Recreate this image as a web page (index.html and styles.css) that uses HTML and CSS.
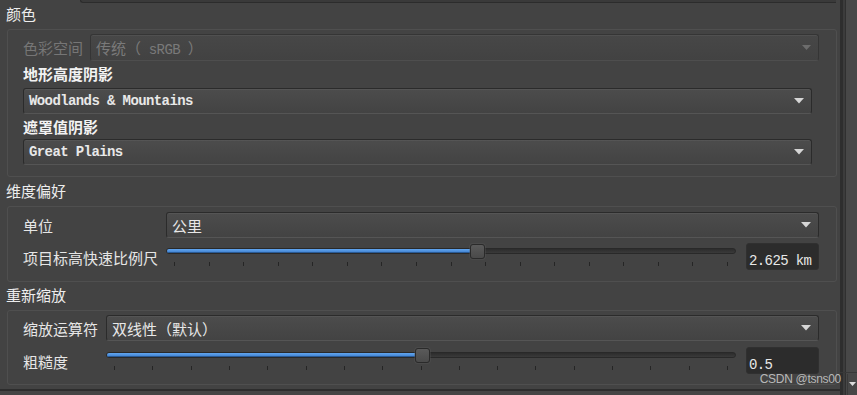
FILE: index.html
```html
<!DOCTYPE html>
<html lang="zh">
<head>
<meta charset="utf-8">
<title>Settings</title>
<link rel="stylesheet" href="styles.css">
</head>
<body>
<div class="window">
  <div class="main">
    <div class="top-strip"></div>

    <div class="section-title t1">颜色</div>
    <div class="group g1">
      <div class="row">
        <span class="label disabled l-space">色彩空间</span>
        <div class="combo combo-disabled">
          <span class="ctext">传统（<span class="mono"> sRGB </span>）</span>
          <svg class="arrow" width="9" height="5" viewBox="0 0 9 5"><polygon points="0,0 9,0 4.5,5"/></svg>
        </div>
      </div>
      <div class="sublabel s1">地形高度阴影</div>
      <div class="combo combo-inset">
        <span class="mono bold">Woodlands &amp; Mountains</span>
        <svg class="arrow" width="10" height="6" viewBox="0 0 10 6"><polygon points="0,0 10,0 5,5.5"/></svg>
      </div>
      <div class="sublabel s2">遮罩值阴影</div>
      <div class="combo combo-inset">
        <span class="mono bold">Great Plains</span>
        <svg class="arrow" width="10" height="6" viewBox="0 0 10 6"><polygon points="0,0 10,0 5,5.5"/></svg>
      </div>
    </div>

    <div class="section-title t2">维度偏好</div>
    <div class="group g2">
      <div class="row">
        <span class="label l-wide">单位</span>
        <div class="combo">
          <span class="ctext">公里</span>
          <svg class="arrow" width="10" height="6" viewBox="0 0 10 6"><polygon points="0,0 10,0 5,5.5"/></svg>
        </div>
      </div>
      <div class="row slider-row sr2">
        <span class="label l-wide">项目标高快速比例尺</span>
        <div class="slider" style="--v:0.548">
          <div class="groove"><div class="fill"></div></div>
          <div class="ticks">
            <i></i><i></i><i></i><i></i><i></i><i></i><i></i><i></i><i></i><i></i><i></i><i></i><i></i><i></i><i></i><i></i><i></i>
          </div>
          <div class="handle"></div>
        </div>
        <div class="value">2.625 km</div>
      </div>
    </div>

    <div class="section-title t3">重新缩放</div>
    <div class="group g3">
      <div class="row">
        <span class="label l-narrow">缩放运算符</span>
        <div class="combo">
          <span class="ctext">双线性（默认）</span>
          <svg class="arrow" width="10" height="6" viewBox="0 0 10 6"><polygon points="0,0 10,0 5,5.5"/></svg>
        </div>
      </div>
      <div class="row slider-row sr3">
        <span class="label l-narrow">粗糙度</span>
        <div class="slider" style="--v:0.502">
          <div class="groove"><div class="fill"></div></div>
          <div class="ticks">
            <i></i><i></i><i></i><i></i><i></i><i></i><i></i><i></i><i></i><i></i><i></i><i></i><i></i><i></i><i></i><i></i><i></i>
          </div>
          <div class="handle"></div>
        </div>
        <div class="value">0.5</div>
      </div>
    </div>

    <div class="footer"></div>
  </div>

  <div class="scrollbar">
    <div class="track"></div>
    <div class="btn-down">
      <svg width="7" height="4" viewBox="0 0 7 4"><polygon points="0,0 7,0 3.5,4"/></svg>
    </div>
  </div>

  <div class="watermark">CSDN @tsns00</div>
</div>
</body>
</html>
```

FILE: styles.css
```css
* { box-sizing: border-box; }

html, body {
  margin: 0;
  padding: 0;
}

body {
  background: #434343;
  font-family: "Noto Sans CJK SC", "Noto Sans", sans-serif;
  font-size: 15px;
  color: #e6e6e6;
}

.window {
  position: relative;
  width: 857px;
  height: 395px;
  display: flex;
  overflow: hidden;
  background: #434343;
}

.main {
  width: 840px;
  display: flex;
  flex-direction: column;
  padding-left: 7px;
  padding-right: 3px;
}

.top-strip {
  height: 3px;
  margin-left: 73px;
  margin-right: 1px;
  background: #3a3a3a;
  border-bottom: 1px solid #2c2c2c;
  border-left: 1px solid #2c2c2c;
  border-bottom-left-radius: 3px;
  flex: none;
}

.section-title {
  margin-left: -1px;
  color: #ededed;
  flex: none;
}
.t1 { height: 26px; line-height: 22px; }
.t2 { height: 29px; line-height: 27px; }
.t3 { height: 28px; line-height: 26px; }

.group {
  border: 1px solid #4f4f4f;
  border-radius: 3px;
  padding: 4px 17px 11px 15px;
  display: flex;
  flex-direction: column;
  flex: none;
}
.g2 { padding-top: 5px; }
.g3 { padding-bottom: 10px; }

.row {
  display: flex;
  align-items: center;
  flex: none;
}

.label {
  flex: none;
  white-space: nowrap;
  color: #e6e6e6;
}
.label.disabled { color: #767676; }
.l-space { width: 67px; }
.l-wide { width: 143px; }
.l-narrow { width: 83px; }

.sublabel {
  font-weight: bold;
  color: #f2f2f2;
  flex: none;
}
.s1 { height: 27px; line-height: 25px; }
.s2 { height: 25px; line-height: 25px; }

.combo {
  flex: 1;
  height: 26px;
  display: flex;
  align-items: center;
  justify-content: space-between;
  padding: 0 7px 0 5px;
  border: 1px solid #2b2b2b;
  border-bottom-color: #555555;
  border-radius: 3px;
  background: linear-gradient(#4c4c4c, #434343);
  box-shadow: inset 0 1px 0 rgba(255, 255, 255, 0.05);
}
.combo-inset {
  flex: none;
  margin-right: 7px;
}
.combo-disabled {
  height: 27px;
  background: linear-gradient(#474747, #424242);
  border-color: #353535;
  border-bottom-color: #4e4e4e;
  color: #7a7a7a;
}

.ctext { white-space: nowrap; color: #e8e8e8; }
.combo-disabled .ctext { color: #7a7a7a; }

.mono {
  font-family: "Liberation Mono", "Noto Sans CJK SC", monospace;
  font-size: 14px;
  letter-spacing: -0.6px;
  white-space: pre;
}
.bold { font-weight: bold; color: #e8e8e8; }

.arrow { flex: none; fill: #d6d6d6; }
.combo-disabled .arrow { fill: #6c6c6c; }

.slider-row { height: 27px; align-items: stretch; }
.sr2 { margin-top: 5px; }
.sr3 { margin-top: 6px; }
.slider-row .label { display: flex; align-items: center; padding-top: 2px; }

.slider {
  flex: 1;
  position: relative;
  margin-right: 10px;
}

.groove {
  margin-top: 5px;
  height: 6px;
  border: 1px solid #292929;
  border-radius: 3px;
  background: linear-gradient(#2c2c2c, #3a3a3a);
  overflow: hidden;
}

.fill {
  height: 100%;
  width: calc((100% - 15px) * var(--v) + 7px);
  background: linear-gradient(#62a6f0, #3c7ccb);
  box-shadow: inset 0 -1px 0 #2a5a94;
}

.ticks {
  display: flex;
  justify-content: space-between;
  margin-top: 8px;
  padding: 0 8px;
}
.ticks i {
  display: block;
  width: 1px;
  height: 4px;
  background: #252525;
}

.handle {
  position: absolute;
  top: 1px;
  left: calc((100% - 15px) * var(--v));
  width: 15px;
  height: 15px;
  border: 1px solid #2a2a2a;
  border-radius: 3px;
  background: linear-gradient(#5a5a5a, #4a4a4a);
  box-shadow: 0 0 0 1px rgba(90, 90, 90, 0.35);
}

.value {
  flex: none;
  width: 73px;
  height: 27px;
  padding: 9px 0 0 2px;
  background: #2c2c2c;
  border: 1px solid #303030;
  border-radius: 3px;
  font-family: "Liberation Mono", monospace;
  font-size: 14px;
  letter-spacing: -0.6px;
  line-height: 16px;
  color: #e8e8e8;
  white-space: pre;
}

.footer {
  flex: 1;
  margin-top: 4px;
  margin-left: -7px;
  margin-right: -3px;
  border-top: 2px solid #2d2d2d;
  background: #454545;
}

.scrollbar {
  width: 17px;
  display: flex;
  flex-direction: column;
  background: linear-gradient(to right, #2e2e2e 0 3px, #3c3c3c 3px 5px, #303030 5px 6px, #484848 6px);
}
.track {
  flex: 1;
  border-bottom: 1px solid #383838;
}
.btn-down {
  height: 21px;
  margin-left: 7px;
  margin-top: 1px;
  border-left: 1px solid #3a3a3a;
  display: flex;
  justify-content: center;
  padding-top: 8px;
  background: #474747;
}
.btn-down svg { fill: #dcdcdc; }

.watermark {
  position: absolute;
  right: 16px;
  top: 372px;
  font-family: "Liberation Sans", Arial, sans-serif;
  font-size: 12px;
  letter-spacing: -0.3px;
  color: rgba(215, 215, 215, 0.8);
  white-space: nowrap;
}
```
